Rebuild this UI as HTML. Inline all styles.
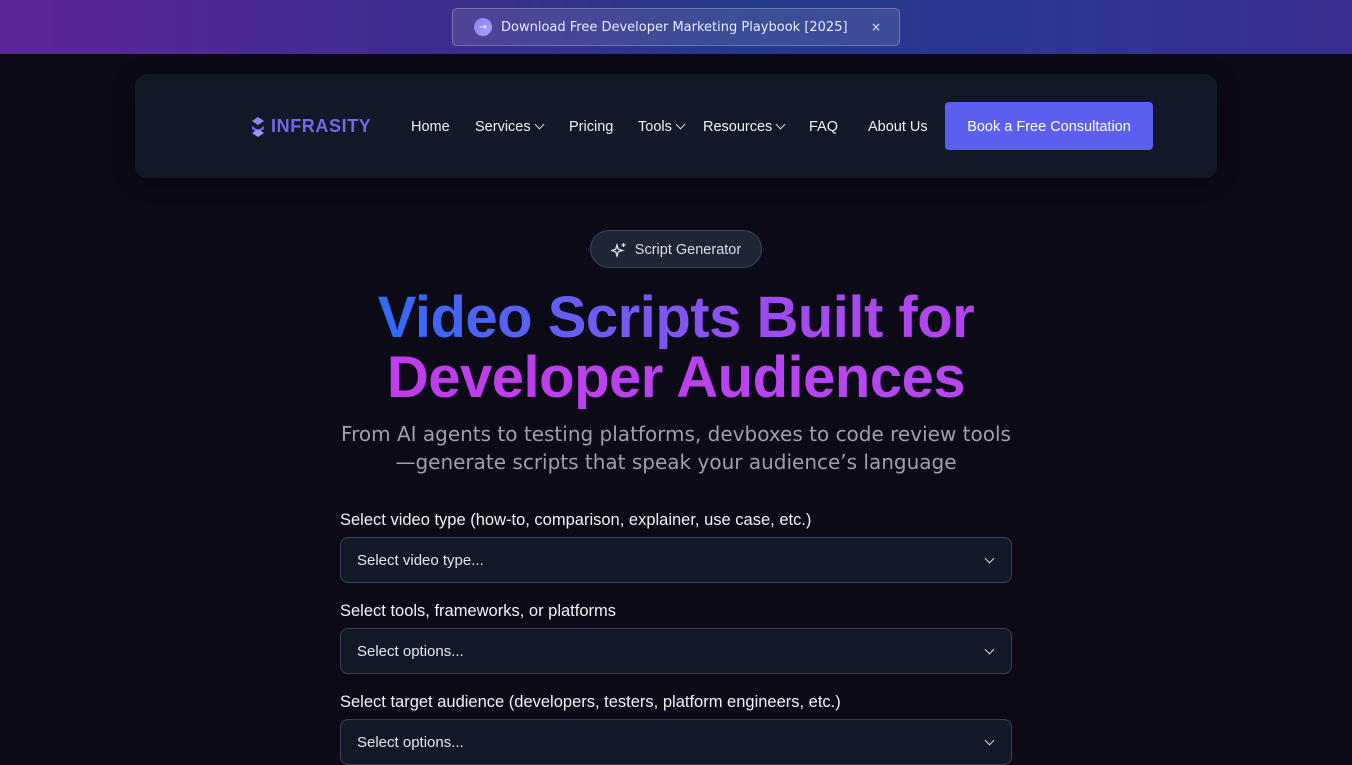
<!DOCTYPE html>
<html><head><meta charset="utf-8">
<style>
*{box-sizing:border-box;margin:0;padding:0}
body{width:1352px;height:760px;overflow:hidden;background:#0c0a17;font-family:"Liberation Sans",sans-serif;color:#fff;position:relative}
.top{position:absolute;left:0;top:0;width:1352px;height:54px;background:linear-gradient(90deg,#5b2596 0%,#3a2e8c 35%,#243a8c 55%,#2f3590 80%,#3a2f8e 100%)}
.pill{position:absolute;left:452px;top:8px;width:448px;height:38px;border:1px solid rgba(255,255,255,.25);border-radius:5px;background:rgba(255,255,255,.1);display:flex;align-items:center;font-family:"DejaVu Sans",sans-serif;font-size:13px;color:#e8ecff}
.pill .dot{width:18px;height:18px;border-radius:50%;background:linear-gradient(135deg,#8b7cf6,#a4a6f8);margin-left:21px;margin-right:9px;display:flex;align-items:center;justify-content:center;font-size:10px;color:#fff}
.pill .x{margin-left:auto;margin-right:18px;font-size:12px}
.nav{position:absolute;left:135px;top:74px;width:1082px;height:104px;background:#111827;border-radius:12px;box-shadow:0 4px 20px rgba(0,0,0,.4)}
.logo{position:absolute;left:116px;top:42px;display:flex;align-items:center;font-weight:bold;font-size:18px;letter-spacing:.6px;color:#7468e8}
.links{position:absolute;top:45px;font-size:14.5px;color:#f1f1f5}
.links span{position:absolute;white-space:nowrap}
.chev{display:inline-block;width:7px;height:7px;border-right:1.4px solid #ddd;border-bottom:1.4px solid #ddd;transform:rotate(45deg);margin-left:5px;position:relative;top:-3px}
.btn{position:absolute;left:810px;top:28px;width:208px;height:48px;background:#5b5ff0;border-radius:4px;font-size:14.5px;display:flex;align-items:center;justify-content:center;padding-top:2px}
.badge{position:absolute;left:590px;top:230px;width:172px;height:38px;border:1px solid #3d4460;border-radius:19px;background:#1e2535;display:flex;align-items:center;justify-content:center;font-size:14.5px;color:#d8dbe6;gap:8px;padding-top:1px}
h1{position:absolute;left:0;top:288px;width:1352px;text-align:center;font-size:58px;font-weight:bold;line-height:60px;letter-spacing:-.5px}
h1 .l1{background:linear-gradient(90deg,#2f6af5 0%,#6a5cf2 35%,#a24af0 70%,#b544ee 100%);-webkit-background-clip:text;color:transparent}
h1 .l2{background:linear-gradient(90deg,#c03cec,#b448ee);-webkit-background-clip:text;color:transparent}
.sub{position:absolute;left:0;top:420px;width:1352px;text-align:center;font-family:"DejaVu Sans",sans-serif;font-size:20px;line-height:28px;color:#9ca0ad}
.lbl{position:absolute;left:340px;font-size:16.5px;color:#f2f2f5}
.sel{position:absolute;left:340px;width:672px;height:46px;background:#111827;border:1px solid #3a4152;border-radius:8px;font-size:15px;color:#e4e6ec;padding-left:16px;display:flex;align-items:center}
.sel .chev{position:absolute;right:18px;top:17px;margin:0}
</style></head><body>
<div class="top"><div class="pill"><div class="dot">→</div>Download Free Developer Marketing Playbook [2025]<span class="x">×</span></div></div>
<div class="nav">
<div class="logo"><svg width="14" height="20" viewBox="0 0 14 20" style="margin-right:6px"><path d="M7 0L13 4L7 8L1 4Z" fill="#8f86ee"/><path d="M1 9L7 13L13 9L13 12L7 16L1 12Z" fill="#6c63e6"/><path d="M7 12L13 16L7 20L1 16Z" fill="#9a93f0"/></svg>INFRASITY</div>
<div class="links">
<span style="left:276px">Home</span>
<span style="left:340px">Services<i class="chev"></i></span>
<span style="left:434px">Pricing</span>
<span style="left:503px">Tools<i class="chev"></i></span>
<span style="left:568px">Resources<i class="chev"></i></span>
<span style="left:674px">FAQ</span>
<span style="left:733px">About Us</span>
</div>
<div class="btn">Book a Free Consultation</div>
</div>
<div class="badge"><svg width="16" height="16" viewBox="0 0 16 16" fill="none" stroke="#e0e3ee" stroke-width="1.3"><path d="M6 3L7.3 7.2L11.5 8.5L7.3 9.8L6 14L4.7 9.8L0.5 8.5L4.7 7.2Z"/><path d="M12.5 1V5M10.5 3H14.5"/></svg>Script Generator</div>
<h1><span class="l1">Video Scripts Built for</span><br><span class="l2">Developer Audiences</span></h1>
<div class="sub">From AI agents to testing platforms, devboxes to code review tools<br>—generate scripts that speak your audience’s language</div>
<div class="lbl" style="top:511px">Select video type (how-to, comparison, explainer, use case, etc.)</div>
<div class="sel" style="top:537px">Select video type...<i class="chev"></i></div>
<div class="lbl" style="top:602px">Select tools, frameworks, or platforms</div>
<div class="sel" style="top:628px">Select options...<i class="chev"></i></div>
<div class="lbl" style="top:693px">Select target audience (developers, testers, platform engineers, etc.)</div>
<div class="sel" style="top:719px">Select options...<i class="chev"></i></div>
</body></html>
